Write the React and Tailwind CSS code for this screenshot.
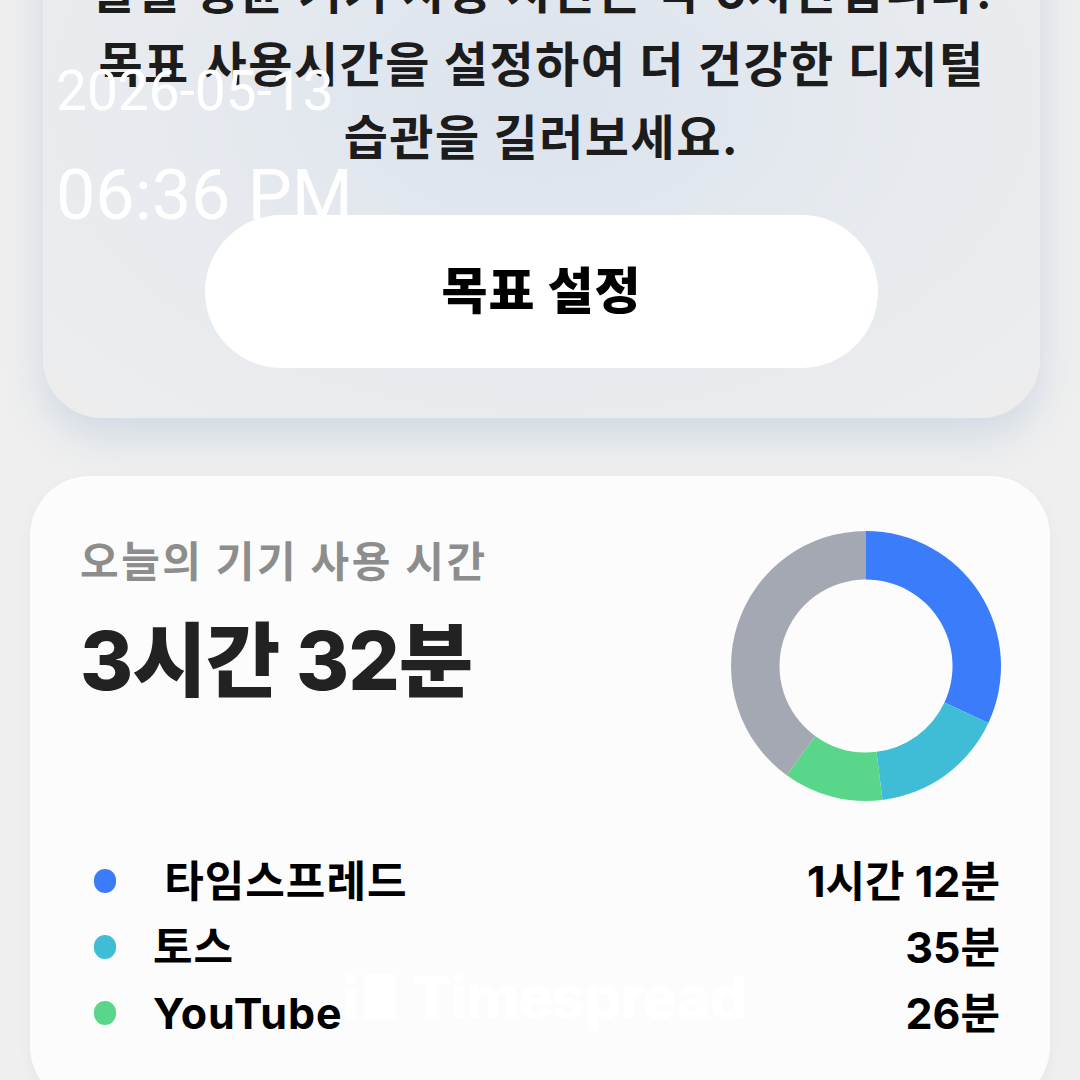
import React from "react";

function arcPath(cx, cy, rOut, rIn, a0, a1) {
  const rad = (a) => ((a - 90) * Math.PI) / 180;
  const p = (r, a) => [cx + r * Math.cos(rad(a)), cy + r * Math.sin(rad(a))];
  const large = a1 - a0 > 180 ? 1 : 0;
  const [x0, y0] = p(rOut, a0);
  const [x1, y1] = p(rOut, a1);
  const [x2, y2] = p(rIn, a1);
  const [x3, y3] = p(rIn, a0);
  return `M${x0} ${y0} A${rOut} ${rOut} 0 ${large} 1 ${x1} ${y1} L${x2} ${y2} A${rIn} ${rIn} 0 ${large} 0 ${x3} ${y3} Z`;
}

function Donut() {
  const segs = [
    { a0: 0, a1: 115, c: "#3b7cfb" },
    { a0: 115, a1: 173, c: "#3fbdd6" },
    { a0: 173, a1: 216, c: "#5ad68a" },
    { a0: 216, a1: 360, c: "#a3a8b3" },
  ];
  return (
    <svg width="272" height="272" viewBox="0 0 272 272" className="shrink-0">
      {segs.map((s, i) => (
        <path key={i} d={arcPath(136, 136, 135, 86.5, s.a0, s.a1 === 360 ? 359.999 : s.a1)} fill={s.c} />
      ))}
    </svg>
  );
}

function LegendRow({ color, label, value }) {
  return (
    <div className="flex items-center h-[66px]">
      <div className="w-[22px] h-[24px] rounded-full shrink-0" style={{ backgroundColor: color }} />
      <div className="ml-[37px] text-[43px] font-bold text-black leading-none whitespace-pre tracking-[1px]">{label}</div>
      <div className="ml-auto text-[43px] font-bold text-black leading-none tracking-[0px]">{value}</div>
    </div>
  );
}

export default function App() {
  return (
    <div className="relative w-[1080px] h-[1080px] overflow-hidden bg-[#efefef] font-['Inter','Noto_Sans_CJK_KR',sans-serif]">
      <div className="flex flex-col">
        {/* Top card */}
        <div className="ml-[43px] w-[997px] mt-[-160px] rounded-[60px] pt-[115px] pb-[50px] flex flex-col items-center bg-[radial-gradient(ellipse_at_50%_45%,#dbe3ed_0%,#e6eaef_50%,#ededed_100%)] shadow-[0_18px_40px_rgba(170,190,215,0.45)]">
          <div className="text-center text-[48px] leading-[73px] font-bold text-[#1c1c1c] tracking-[1.5px]">
            <div>일일 평균 기기 사용 시간은 약 6시간입니다.</div>
            <div>목표 사용시간을 설정하여 더 건강한 디지털</div>
            <div>습관을 길러보세요.</div>
          </div>
          <div className="mt-[41px] w-[673px] h-[153px] rounded-full bg-white flex items-center justify-center">
            <span className="text-[50px] font-extrabold text-black tracking-[1px]">목표 설정</span>
          </div>
        </div>

        {/* Bottom card */}
        <div className="ml-[30px] w-[1020px] mt-[58px] rounded-[60px] bg-[#fcfcfc] shadow-[0_4px_16px_rgba(0,0,0,0.04)] pt-[54px] pl-[50px] pr-[48px] pb-[60px]">
          <div className="flex items-start">
            <div className="flex flex-col mt-[4px]">
              <div className="text-[42px] font-bold text-[#8d8d8d] leading-[56px] tracking-[2.5px]">오늘의 기기 사용 시간</div>
              <div className="mt-[24px] text-[81px] font-extrabold text-[#222222] leading-[94px] tracking-[-1px]">3시간 32분</div>
            </div>
            <div className="ml-auto">
              <Donut />
            </div>
          </div>
          <div className="mt-[46px] pl-[14px] pr-[2px] flex flex-col">
            <LegendRow color="#3b7cfb" label=" 타임스프레드" value="1시간 12분" />
            <LegendRow color="#3fbdd6" label="토스" value="35분" />
            <LegendRow color="#5ad68a" label="YouTube" value="26분" />
          </div>
        </div>
      </div>

      {/* Timestamp overlay */}
      <div className="absolute left-[56px] top-[64px] text-white font-['Roboto',sans-serif] text-[55px] leading-none">2026-05-13</div>
      <div className="absolute left-[56px] top-[160px] text-white font-['Roboto',sans-serif] text-[70px] leading-none">06:36 PM</div>

      {/* Watermark */}
      <div className="absolute left-[344px] top-[968px] flex items-center gap-[14px] text-white">
        <svg width="54" height="50" viewBox="0 0 54 50">
          <rect x="2" y="2" width="10" height="10" rx="3" fill="#ffffff" />
          <rect x="2" y="17" width="10" height="31" rx="2" fill="#ffffff" />
          <rect x="20" y="2" width="32" height="46" rx="3" fill="#ffffff" />
        </svg>
        <span className="text-[58px] font-extrabold font-['Inter',sans-serif] tracking-[-1px] leading-none">Timespread</span>
      </div>
    </div>
  );
}
